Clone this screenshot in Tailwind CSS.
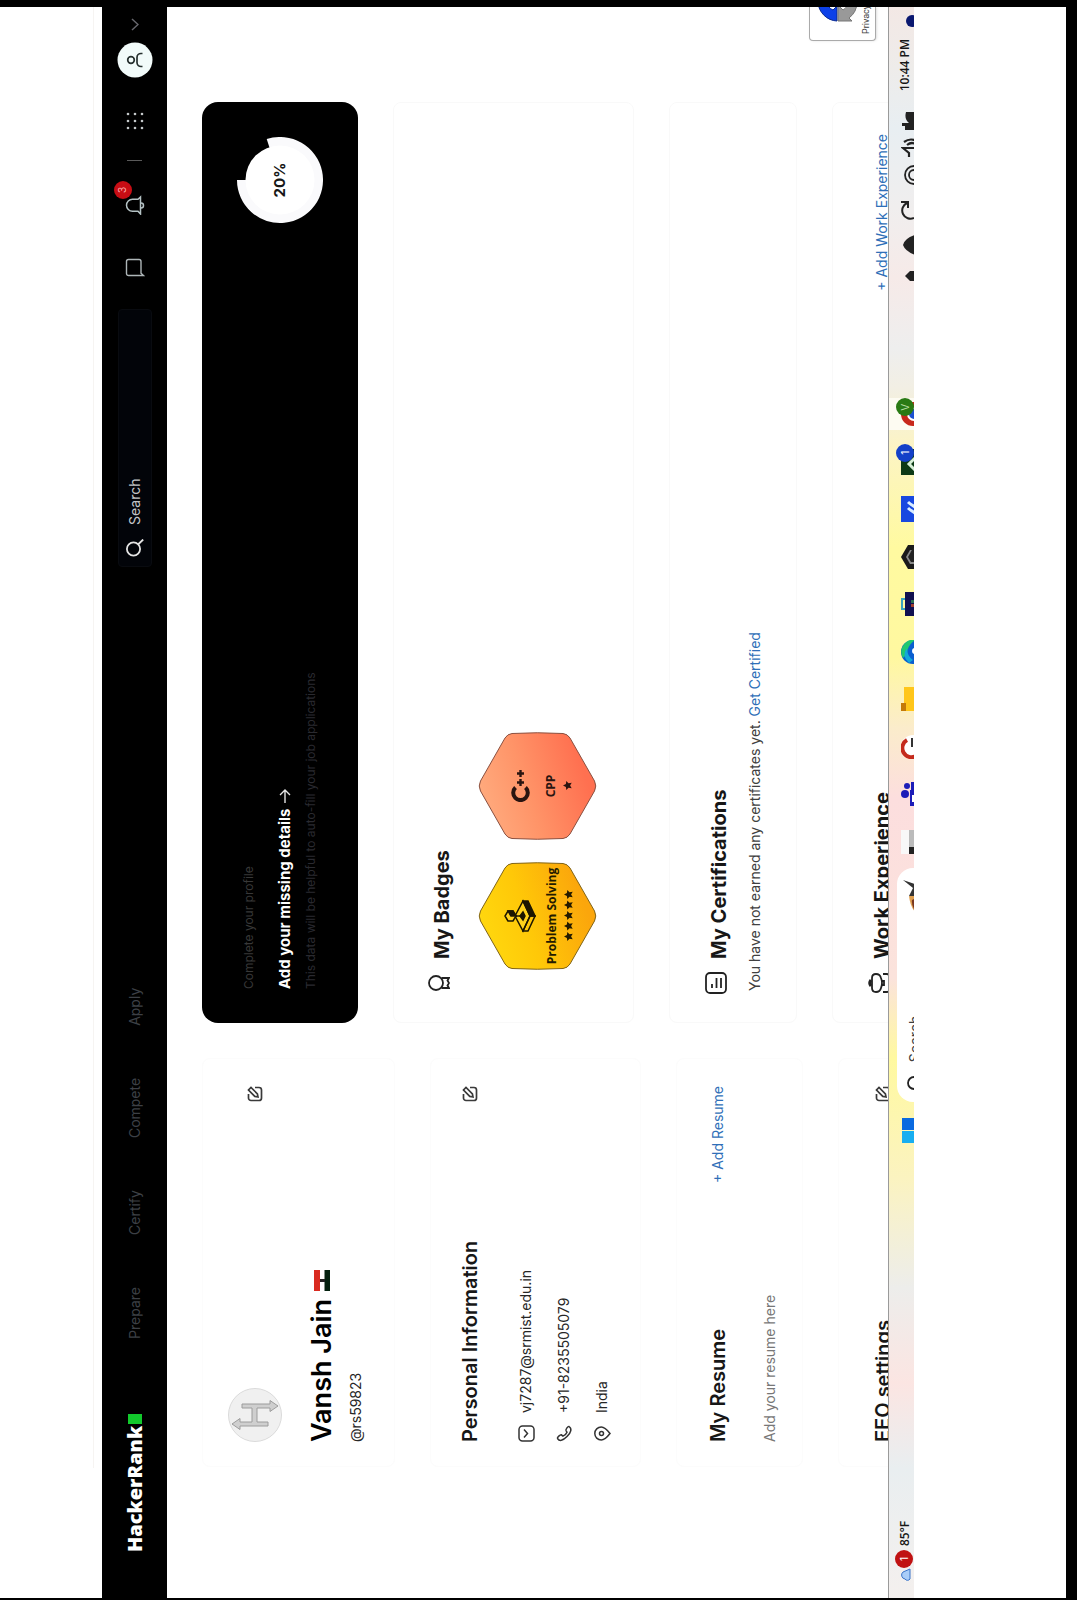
<!DOCTYPE html>
<html lang="en">
<head>
<meta charset="utf-8">
<meta name="viewport" content="width=device-width, initial-scale=1">
<title>Vansh Jain - HackerRank profile</title>
<script src="https://cdn.jsdelivr.net/npm/@tailwindcss/browser@4"></script>
</head>
<body class="bg-black font-['Inter',sans-serif]">
<!-- Landscape desktop turned a quarter to the left -->
<div class="h-screen w-full overflow-hidden">
<div class="flex h-[100vw] w-[100vh] origin-top-left translate-y-[100vh] -rotate-90 flex-col pr-[7px] pb-[11px] pl-[2px] text-sm text-neutral-900">
  <div class="flex h-[102px] shrink-0 flex-col justify-end bg-white pb-2 pl-[130px]"><div class="border-t border-[#f6f4f2]"></div></div>

  <header class="flex h-[65px] shrink-0 items-center bg-black pr-[11px] pl-[46px]">
    <a href="#" class="flex items-center gap-0.5 font-['Open_Sans',sans-serif] text-xl font-extrabold text-white">HackerRank<span class="h-3.5 w-[10px] bg-[#12c92c]"></span></a>
    <nav class="ml-[75px] flex gap-[52px] leading-5 text-[#3d4046]">
      <a href="#">Prepare</a><a href="#">Certify</a><a href="#">Compete</a><a href="#">Apply</a>
    </nav>
    <label class="ml-auto flex h-[34px] w-[258px] items-center gap-[14px] rounded border border-[#090b10] bg-[#020409] pl-[9px]">
      <svg class="size-[18px] shrink-0" viewBox="0 0 18 18" fill="none" stroke="#e4e4e4" stroke-width="1.8"><circle cx="8" cy="7.500" r="6.600"/><path d="M12.500 12l5 5.200"/></svg>
      <input type="text" aria-label="Search" placeholder="Search" class="min-w-0 flex-1 bg-transparent text-sm text-white placeholder:text-[#c2c4c6]">
    </label>
    <div class="flex items-center pl-8">
      <button aria-label="Messages"><svg class="size-5" viewBox="0 0 20 20" fill="none" stroke="#aeb6b8" stroke-width="1.400"><path d="M1.500 18.500V3.500a2 2 0 0 1 2-2h12a2 2 0 0 1 2 2V14a2 2 0 0 1-2 2H3.800z"/></svg></button>
      <button aria-label="Notifications" class="relative ml-[42px]">
        <svg class="size-5" viewBox="0 0 20 20" fill="none" stroke="#b4c2c4" stroke-width="1.500"><path d="M1 15.500h17l-2.200-2.500V7.500a6 6 0 0 0-12 0V13z"/><path d="M7 16a2.500 2.500 0 0 0 5 0"/></svg>
        <span class="absolute -top-[11px] left-4 flex size-[18px] items-center justify-center rounded-full bg-[#c80d14] text-[10px] text-[#ffb0b0]">3</span>
      </button>
      <span class="ml-[34px] h-[15px] border-l border-[#5a5a5a]"></span>
      <button aria-label="Apps" class="ml-[30px]"><svg class="size-[18px]" viewBox="0 0 18 18" fill="#c4c8ca"><circle cx="2" cy="2" r="1.300"/><circle cx="9" cy="2" r="1.300"/><circle cx="16" cy="2" r="1.300"/><circle cx="2" cy="9" r="1.300"/><circle cx="9" cy="9" r="1.300"/><circle cx="16" cy="9" r="1.300"/><circle cx="2" cy="16" r="1.300"/><circle cx="9" cy="16" r="1.300"/><circle cx="16" cy="16" r="1.300"/></svg></button>
      <button aria-label="Account" class="ml-[34px] flex items-center gap-[11px]">
        <svg class="size-9" viewBox="0 0 36 36"><circle cx="18" cy="18" r="17.500" fill="#f2fbfa"/><g fill="none" stroke="#26302f" stroke-width="1.700"><circle cx="18" cy="14" r="3.300"/><path d="M11.500 25.500v-1.500a4 4 0 0 1 4-4h5a4 4 0 0 1 4 4v1.500"/></g></svg>
        <svg class="h-2 w-[13px]" viewBox="0 0 13 8" fill="none" stroke="#66666c" stroke-width="1.500"><path d="M1 1l5.500 6L12 1"/></svg>
      </button>
    </div>
  </header>

  <main class="relative grid min-h-0 flex-1 grid-cols-[409px_1fr] gap-x-[35px] overflow-hidden bg-white pt-[35px] pr-[95px] pl-[131px]">
    <div class="flex flex-col gap-[35px]">
      <section class="rounded-lg border border-[#fcfcfc] pt-[25px] pr-[27px] pb-7 pl-6">
        <div class="flex items-center justify-between">
          <svg class="size-[54px]" viewBox="0 0 54 54"><circle cx="27" cy="27" r="26.500" fill="#f0f0f0" stroke="#dadada"/><path d="M16 40V12h-3.500L18 4l5.500 8H20v12h14V14h4v28h3.500L36 50l-5.500-8H34V29H20v11z" fill="#cfcfcf" stroke="#9c9c9c"/></svg>
          <button aria-label="Edit profile"><svg class="size-4" viewBox="0 0 16 16" fill="none" stroke="#3a3a3a" stroke-width="1.700"><path d="M8 1.500H4A2.500 2.500 0 0 0 1.500 4v8A2.500 2.500 0 0 0 4 14.500h8a2.500 2.500 0 0 0 2.500-2.500V8"/><path d="M5 11l.6-3.200L12 1.500l2.500 2.500-6.300 6.400z"/></svg></button>
        </div>
        <h1 class="mt-[22px] flex items-center gap-2 text-[27px] leading-9 font-semibold text-black">Vansh Jain
          <svg class="h-4 w-[21px]" viewBox="0 0 21 16"><path fill="#fff" d="M0 0h21v16H0z"/><path fill="#d92a20" d="M0 0h21v6H0z"/><path fill="#04210f" d="M0 10.500h21V16H0z"/><path fill="#222" d="M9 6h3v5H9z"/></svg>
        </h1>
        <p class="mt-1.5 leading-5 text-neutral-800">@rs59823</p>
      </section>

      <section class="rounded-lg border border-[#fcfcfc] pt-[25px] pr-[27px] pb-7 pl-6">
        <div class="flex items-center justify-between">
          <h2 class="text-xl leading-7 font-semibold">Personal Information</h2>
          <button aria-label="Edit personal information"><svg class="size-4" viewBox="0 0 16 16" fill="none" stroke="#3a3a3a" stroke-width="1.700"><path d="M8 1.500H4A2.500 2.500 0 0 0 1.500 4v8A2.500 2.500 0 0 0 4 14.500h8a2.500 2.500 0 0 0 2.500-2.500V8"/><path d="M5 11l.6-3.200L12 1.500l2.500 2.500-6.300 6.400z"/></svg></button>
        </div>
        <ul class="mt-8 flex flex-col gap-[18px] leading-5 text-neutral-800">
          <li class="flex items-center gap-3"><svg class="size-[17px]" viewBox="0 0 17 17" fill="none" stroke="#333" stroke-width="1.500"><rect x="1" y="1" width="15" height="15" rx="3.500"/><path d="M4.500 6l4 3.500 4-3.500"/></svg>vj7287@srmist.edu.in</li>
          <li class="flex items-center gap-3"><svg class="size-[17px]" viewBox="0 0 17 17" fill="none" stroke="#333" stroke-width="1.500"><path d="M3.500 1.500c-3 2-2.500 5 2 9.500s8 5 10 2c.6-1-3-3.500-4-3l-1.800 1c-1.500-.6-3.200-2.400-3.800-4l1.300-1.700C7.500 4.300 4.500.9 3.500 1.500z"/></svg>+91-8235505079</li>
          <li class="flex items-center gap-3"><svg class="size-[17px]" viewBox="0 0 17 17" fill="none" stroke="#333" stroke-width="1.500"><path d="M8.500 16C4 12.500 2 10 2 7.300a6.500 6.500 0 0 1 13 0C15 10 13 12.500 8.500 16z"/><circle cx="8.500" cy="7.500" r="2"/></svg>India</li>
        </ul>
      </section>

      <section class="rounded-lg border border-[#fcfcfc] pt-[27px] pr-[27px] pb-[22px] pl-6">
        <div class="flex items-center justify-between">
          <h2 class="text-xl leading-7 font-semibold">My Resume</h2>
          <a href="#" class="text-[#2f6fb8]">+ Add Resume</a>
        </div>
        <p class="mt-7 leading-5 text-[#777]">Add your resume here</p>
      </section>

      <section class="rounded-lg border border-[#fcfcfc] pt-[30px] pr-[27px] pb-7 pl-6">
        <div class="flex items-center justify-between">
          <h2 class="text-xl leading-7 font-semibold">EEO settings</h2>
          <button aria-label="Edit EEO settings"><svg class="size-4" viewBox="0 0 16 16" fill="none" stroke="#3a3a3a" stroke-width="1.700"><path d="M8 1.500H4A2.500 2.500 0 0 0 1.500 4v8A2.500 2.500 0 0 0 4 14.500h8a2.500 2.500 0 0 0 2.500-2.500V8"/><path d="M5 11l.6-3.200L12 1.500l2.500 2.500-6.300 6.400z"/></svg></button>
        </div>
      </section>
    </div>

    <div class="flex flex-col gap-[35px]">
      <section class="flex h-[156px] shrink-0 items-center justify-between rounded-2xl bg-black pr-[35px] pl-[34px]">
        <div>
          <p class="text-xs leading-5 text-[#383838]">Complete your profile</p>
          <a href="#" class="mt-3.5 flex items-center gap-1.5 text-[15px] leading-6 font-bold text-white">Add your missing details
            <svg class="h-3 w-[14px]" viewBox="0 0 14 12" fill="none" stroke="#e4e4e4" stroke-width="1.400"><path d="M0 6h13M8 1l5 5-5 5"/></svg></a>
          <p class="mt-1 text-xs leading-5 text-[#2a2a30]">This data will be helpful to auto-fill your job applications</p>
        </div>
        <div class="relative flex size-[86px] items-center justify-center">
          <svg class="absolute inset-0 size-full" viewBox="0 0 86 86"><path fill="#fafafc" d="M43 43V0A43 43 0 1 0 83.900 29.700z"/><circle cx="43" cy="43" r="34.500" fill="#fff"/></svg>
          <span class="relative text-[15px] font-bold">20%</span>
        </div>
      </section>

      <section class="rounded-lg border border-[#f9f9f9] pt-[34px] pb-9 pl-7">
        <h2 class="flex items-start gap-[13px] text-xl leading-7 font-bold">
          <svg class="size-[22px]" viewBox="0 0 22 22" fill="none" stroke="#222" stroke-width="1.800"><circle cx="11" cy="8" r="7"/><path d="M6 13.500V21l2.500-1.500L11 21l2.500-1.500L16 21v-7.500"/></svg>My Badges</h2>
        <div class="mt-[22px] ml-6 flex gap-[22px]">
          <div class="relative flex h-[119px] w-[108px] flex-col items-center">
            <svg class="absolute inset-0 size-full" viewBox="0 0 108 119"><defs><linearGradient id="gold" x1="0" y1="0" x2=".3" y2="1"><stop offset="0" stop-color="#ffdc10"/><stop offset=".5" stop-color="#ffc808"/><stop offset="1" stop-color="#fba60c"/></linearGradient></defs><path d="M49 2.500Q54 0 59 2.500L102 27Q106 29.500 106.500 34Q108 59 106.500 85Q106 89.500 102 92L59 116.500Q54 119 49 116.500L6 92Q2 89.500 1.500 85Q0 59 1.500 34Q2 29.500 6 27z" fill="url(#gold)" stroke="#806418"/></svg>
            <svg class="relative mt-[26px] h-8 w-[34px]" viewBox="0 0 34 32" fill="none" stroke="#1c1600" stroke-width="1.500"><path d="M17 11l15 8-15 7-15-7z" fill="#ffd21c"/><path d="M2 19v5l15 7v-5z"/><path d="M32 19v5l-15 7v-5z" fill="#1c1600"/><path d="M13 19l4-3 4 3-4 2z" fill="#1c1600"/><path d="M17 17V11"/><path d="M12 4l5-3 5 3v5l-5 3-5-3z" fill="#ffd21c"/><path d="M17 7l5-3v5l-5 3z" fill="#1c1600"/></svg>
            <span class="relative mt-2 font-['Open_Sans',sans-serif] text-xs leading-4 font-bold whitespace-nowrap text-[#231a00]">Problem Solving</span>
            <svg class="relative mt-1 h-[9px] w-[51px]" viewBox="0 0 51 9" fill="#231a00"><defs><path id="star" d="M4.500 0l1.400 2.900 3.100.4-2.300 2.200.6 3.200-2.800-1.600-2.800 1.600.6-3.200L0 3.300l3.100-.4z"/></defs><use href="#star"/><use href="#star" x="10.500"/><use href="#star" x="21"/><use href="#star" x="31.500"/><use href="#star" x="42"/></svg>
          </div>
          <div class="relative flex h-[119px] w-[108px] flex-col items-center">
            <svg class="absolute inset-0 size-full" viewBox="0 0 108 119"><defs><linearGradient id="bronze" x1="0" y1="0" x2=".3" y2="1"><stop offset="0" stop-color="#ffb184"/><stop offset=".5" stop-color="#ff9468"/><stop offset="1" stop-color="#ff7050"/></linearGradient></defs><path d="M49 2.500Q54 0 59 2.500L102 27Q106 29.500 106.500 34Q108 59 106.500 85Q106 89.500 102 92L59 116.500Q54 119 49 116.500L6 92Q2 89.500 1.500 85Q0 59 1.500 34Q2 29.500 6 27z" fill="url(#bronze)" stroke="#8a5040"/></svg>
            <svg class="relative mt-[33px] h-[19px] w-8" viewBox="0 0 32 19" fill="none" stroke="#2a1410"><path stroke-width="4" d="M14.500 4.500A7.300 7.300 0 1 0 14.500 14.500"/><path stroke-width="2.400" d="M16 9.500h7M19.500 6v7M25 9.500h7M28.500 6v7"/></svg>
            <span class="relative mt-[13px] font-['Open_Sans',sans-serif] text-xs leading-4 font-bold text-[#2a1410]">CPP</span>
            <svg class="relative mt-1 size-[9px]" viewBox="0 0 9 9" fill="#2a1410"><use href="#star"/></svg>
          </div>
        </div>
      </section>

      <section class="rounded-lg border border-[#f9f9f9] pt-[35px] pb-[31px] pl-7">
        <h2 class="flex items-start gap-[13px] text-xl leading-7 font-bold">
          <svg class="size-[22px]" viewBox="0 0 22 22" fill="none" stroke="#222" stroke-width="1.800"><rect x="1" y="1" width="20" height="20" rx="4"/><path d="M6 7h4M6 11.500h10M6 16h10"/></svg>My Certifications</h2>
        <p class="mt-3 pl-[3px] leading-5 text-neutral-700">You have not earned any certificates yet. <a href="#" class="text-[#2f6fb8]">Get Certified</a></p>
      </section>

      <section class="flex items-center justify-between rounded-lg border border-[#f9f9f9] pt-[35px] pr-[31px] pb-8 pl-7">
        <h2 class="flex items-start gap-[13px] text-xl leading-7 font-bold">
          <svg class="size-[22px]" viewBox="0 0 22 22" fill="none" stroke="#222" stroke-width="1.800"><path d="M8 3q3-2.500 6 0" stroke-width="3"/><path d="M6 4h10q4 0 4 4t-4 5q-5 2-10 0-4-1-4-5t4-4zM2 15v4a2 2 0 0 0 2 2h14a2 2 0 0 0 2-2v-4M9 13v3h4v-3"/></svg>Work Experience</h2>
        <a href="#" class="text-[#2f6fb8]">+ Add Work Experience</a>
      </section>
    </div>

    <aside class="absolute right-0 bottom-3 h-[67px] w-[34px] overflow-hidden rounded-l border border-r-0 border-[#aaa] bg-white pt-2 pl-[18px] shadow">
      <svg class="h-10 w-10" viewBox="0 0 40 40"><path fill="#0c40e8" stroke="#0a2a90" d="M1 19A20 20 0 0 1 20 0L20 9a10 10 0 0 0-8 6l4 4z"/><path fill="#999" stroke="#777" d="M1 20h16l-5 5a10 10 0 0 0 8 5v9A20 20 0 0 1 4 31l-3 3z"/></svg>
      <p class="-ml-3 font-['Roboto',sans-serif] text-[9px] leading-4 whitespace-nowrap text-neutral-700">Privacy - Terms</p>
    </aside>
  </main>

  <footer class="flex h-[26px] shrink-0 items-start overflow-hidden border-t border-[#9a9a9a] bg-[linear-gradient(90deg,#f4f0ee_0px,#e9eef0_130px,#fbe5e2_215px,#ededeb_310px,#fbf3c0_420px,#fff9a0_540px,#fbe3dc_620px,#fcdede_800px,#fbeccb_870px,#fff8a0_940px,#fffaa0_1050px,#fcf4c4_1150px,#f2efe4_1210px,#eeeeee_1250px,#f6eae8_1320px,#f0eeee_1390px,#e8eef2_1470px,#eeecea_1530px,#f3e8e5_1591px)]">
    <button class="flex items-start pt-[6px] pl-4">
      <svg class="mt-1 h-3 w-3.5" viewBox="0 0 14 12"><path d="M3 11a3 3 0 0 1 0-5 4 4 0 0 1 7-2l3 7z" fill="#a9cdf8" stroke="#3b74c8"/></svg>
      <span class="flex size-[18px] items-center justify-center rounded-full bg-[#c01212] text-[10px] text-white">1</span>
      <span class="ml-1 font-['Open_Sans',sans-serif] text-xs leading-5 font-semibold">85°F</span>
    </button>
    <button aria-label="Start" class="ml-auto pt-[13px]"><svg class="size-[25px]" viewBox="0 0 25 25"><path d="M0 0h12v12H0zM0 13h12v12H0z" fill="#18aef0"/><path d="M13 0h12v12H13zM13 13h12v12H13z" fill="#0a6ae0"/></svg></button>
    <button class="mt-2 ml-4 flex h-9 w-[234px] items-start rounded-2xl bg-white pt-2 pl-3">
      <svg class="mt-[2px] size-4" viewBox="0 0 16 16" fill="none" stroke="#222" stroke-width="1.800"><circle cx="7" cy="7" r="6"/></svg>
      <span class="ml-3 leading-5 text-neutral-700">Search</span>
      <svg class="mr-3 -mt-1 ml-auto h-6 w-[38px]" viewBox="0 0 38 24"><path fill="#e0a050" d="M0 24q4-14 22-16v16z"/><path fill="#7a3820" d="M4 16q8-6 14-5l6 13H4z"/><path fill="#333" d="M22 8l8 4 8-10-4 12 3 10H22z"/></svg>
    </button>
    <div class="ml-[3px] flex w-[475px] *:flex *:h-[25px] *:flex-1 *:justify-center *:pt-3">
      <button aria-label="Task view"><svg class="size-6" viewBox="0 0 24 24"><path fill="#f8f8f8" d="M0 0h24v24H0z"/><path fill="#bbb" d="M6 8h18v16H6z"/><path fill="#222" d="M0 8h7v16H0z"/></svg></button>
      <button aria-label="Teams"><svg class="size-6" viewBox="0 0 24 24" fill="#1c1cb8"><circle cx="12" cy="4" r="4"/><circle cx="20" cy="6" r="3"/><path d="M0 9h16v15H0zM16 10h8v14h-8z"/><path fill="#fff" d="M4 11h7v2H9v8H6v-8H4z"/></svg></button>
      <button aria-label="Google"><svg class="size-6" viewBox="0 0 24 24"><circle cx="12" cy="12" r="12" fill="#fff"/><path fill="none" stroke="#c42a1c" stroke-width="4" d="M3 15A9 9 0 0 1 19 6"/><path fill="#333" d="M12 10h9v2h-9z"/></svg></button>
      <button aria-label="File Explorer"><svg class="size-6" viewBox="0 0 24 24"><path fill="#ffc61a" d="M0 3h24v21H0z"/><path fill="#c47a08" d="M0 0h8v5H0z"/></svg></button>
      <button aria-label="Edge"><svg class="size-6" viewBox="0 0 24 24"><circle cx="12" cy="12" r="12" fill="#0a5ed0"/><path fill="#1fc870" d="M6 2a12 12 0 0 1 18 12q-6-8-14-8z"/><path fill="#12a8d8" d="M1 8Q8 0 16 6q-8 0-12 6z"/><circle cx="13" cy="14" r="3" fill="#fff"/></svg></button>
      <button aria-label="Store"><svg class="size-6" viewBox="0 0 24 24"><path fill="none" stroke="#3aa4c0" stroke-width="2" d="M7 4V1h10v4"/><path fill="#101050" d="M0 4h24v20H0z"/><path fill="#a04030" d="M9 10h3v3H9z"/><path fill="#2a7050" d="M13 10h3v3h-3z"/></svg></button>
      <button aria-label="Unity"><svg class="size-6" viewBox="0 0 24 24"><path fill="#1a1a1a" d="M12 0l12 7v17H0V7z"/><path fill="#888" d="M12 5l7 4v15H5V9z"/><path fill="#222" d="M12 7l9 5v12H7V10z"/></svg></button>
      <button aria-label="Tasks"><svg class="h-6 w-[26px]" viewBox="0 0 26 24"><path fill="#1848e0" d="M0 0h26v24H0z"/><path fill="none" stroke="#d8ecff" stroke-width="3" d="M9 14q3-5 5-7M15 14q3-5 5-7"/></svg></button>
      <button aria-label="Xbox" class="relative"><svg class="h-6 w-[26px]" viewBox="0 0 26 24"><path fill="#0d3a16" d="M0 0h26v24H0z"/><path fill="none" stroke="#d8f0d8" stroke-width="3" d="M5 14l6-6 8 8"/></svg><span class="absolute top-[7px] right-1.5 flex size-[18px] items-center justify-center rounded-full bg-[#1440c8] text-[10px] text-white">1</span></button>
      <button aria-label="Chrome" class="relative"><span class="-mt-3 flex h-[25px] w-[32px] justify-center bg-[#fdfbf2] pt-3"><svg class="size-6" viewBox="0 0 24 24"><circle cx="12" cy="12" r="12" fill="#c8281c"/><circle cx="12" cy="13" r="6" fill="#1c50d0" stroke="#fff" stroke-width="2"/></svg></span><span class="absolute top-[7px] right-2 flex size-[18px] items-center justify-center rounded-full bg-[#2a7a14] text-[10px] text-[#bfe0a8]">V</span></button>
    </div>
    <div class="ml-[108px] flex items-start gap-[15px] pt-3">
      <svg class="mt-1 h-3 w-3" viewBox="0 0 12 12"><path fill="#222" d="M6 0l5 5v7H1V5z"/></svg>
      <svg class="size-5" viewBox="0 0 20 20"><path fill="#222" d="M0 14Q4 4 10 2q7 2 10 12l-10 6z"/></svg>
      <svg class="size-5" viewBox="0 0 20 20" fill="none" stroke="#222" stroke-width="2"><path d="M2 13A8 8 0 0 1 17 6M18 0v7h-6"/></svg>
      <svg class="size-5" viewBox="0 0 20 20" fill="none" stroke="#222" stroke-width="1.800"><path d="M1 13a9 9 0 0 1 18 0M5 13a5 5 0 0 1 10 0"/></svg>
      <svg class="-ml-2 size-5" viewBox="0 0 20 20" fill="none" stroke="#222" stroke-width="2.200"><path d="M1 8h4l5-6v16M13 6q4 5 0 10M16 3q5 7 0 14"/></svg>
      <svg class="-ml-2 size-5" viewBox="0 0 20 20" fill="#222"><path d="M1 4h4V1h3v7q4-5 11-3v15H1z"/></svg>
    </div>
    <time class="ml-5 pt-[8px] font-['Open_Sans',sans-serif] text-xs leading-4 font-semibold whitespace-nowrap">10:44 PM</time>
    <span class="mt-[17px] mr-2 ml-3 size-3 shrink-0 rounded-full bg-[#0a1870]"></span>
  </footer>
  <div class="h-[152px] shrink-0 bg-white"></div>
</div>
</div>
</body>
</html>
